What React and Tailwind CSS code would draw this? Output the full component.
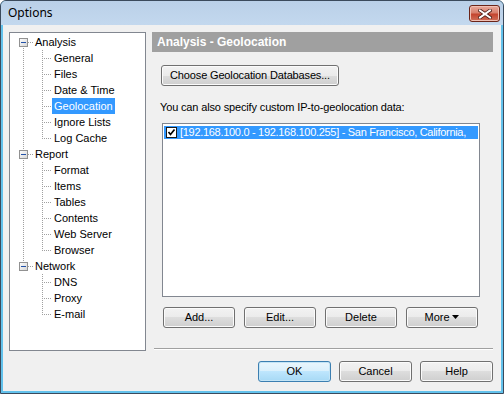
import React from 'react';

const tree = [
    { label: 'Analysis', children: ['General', 'Files', 'Date & Time', 'Geolocation', 'Ignore Lists', 'Log Cache'] },
    { label: 'Report', children: ['Format', 'Items', 'Tables', 'Contents', 'Web Server', 'Browser'] },
    { label: 'Network', children: ['DNS', 'Proxy', 'E-mail'] },
];

const DOT = '#a0a0a0';

const RootLines = ({ first, last }) => (
    <svg width="25" height="16" className="shrink-0" shapeRendering="crispEdges">
        <defs>
            <linearGradient id="exp" x1="0" y1="0" x2="1" y2="1">
                <stop offset="0" stopColor="#ffffff" />
                <stop offset="1" stopColor="#d4d4d4" />
            </linearGradient>
        </defs>
        <line x1="13.5" y1={first ? 8 : 0} x2="13.5" y2={last ? 8 : 16} stroke={DOT} strokeDasharray="1 1" />
        <line x1="18" y1="8.5" x2="24" y2="8.5" stroke={DOT} strokeDasharray="1 1" />
        <rect x="9.5" y="4.5" width="8" height="8" fill="url(#exp)" stroke="#919191" />
        <rect x="11" y="8" width="5" height="1" fill="#2352a8" />
    </svg>
);

const ChildLines = ({ parentLast, last }) => (
    <svg width="42" height="16" className="shrink-0" shapeRendering="crispEdges">
        {!parentLast && <line x1="13.5" y1="0" x2="13.5" y2="16" stroke={DOT} strokeDasharray="1 1" />}
        <line x1="32.5" y1="0" x2="32.5" y2={last ? 9 : 16} stroke={DOT} strokeDasharray="1 1" />
        <line x1="34" y1="8.5" x2="42" y2="8.5" stroke={DOT} strokeDasharray="1 1" />
    </svg>
);

const Button = ({ children, className = '', primary }) => (
    <div
        className={`flex h-[21px] items-center justify-center rounded-[3px] border text-[11px] text-black ${primary
            ? 'border-[#3c7fb1] bg-[linear-gradient(to_bottom,#eaf6fd_0%,#d9f0fc_50%,#bee6fd_50%,#a7d9f5_100%)] shadow-[inset_0_0_0_1px_#c4e5f6]'
            : 'border-[#707070] bg-[linear-gradient(to_bottom,#f2f2f2_0%,#ebebeb_50%,#dddddd_50%,#cfcfcf_100%)] shadow-[inset_0_0_0_1px_#fbfbfb]'
            } ${className}`}
    >
        {children}
    </div>
);

export default function App() {
    return (
        <div className="w-[504px] h-[394px] bg-white" style={{ fontFamily: '"Liberation Sans", Arial, sans-serif' }}>
            <div className="flex h-full w-full flex-col overflow-hidden rounded-t-[6px] border border-[#3b4a5c] bg-[#63c2ec]">
                {/* title bar */}
                <div className="flex h-[24px] shrink-0 items-start justify-between bg-[linear-gradient(to_bottom,#bad0e8,#c3d8ee)] pl-[7px] pr-[3px]">
                    <span className="mt-[4px] text-[12px] leading-[16px] text-black" style={{ fontFamily: '"Noto Sans", "Liberation Sans", sans-serif' }}>Options</span>
                    <div className="mt-[4px] flex h-[17px] w-[31px] items-center justify-center rounded-[3px] border border-[#6b2418] bg-[linear-gradient(to_bottom,#e9a99c_0%,#d8806d_45%,#c4452f_55%,#d0705a_100%)] shadow-[inset_0_0_0_1px_#f0c0b4]">
                        <svg width="14" height="10" viewBox="0 0 14 10">
                            <path d="M2 1.5 L12 8.5 M12 1.5 L2 8.5" stroke="#4a1c14" strokeWidth="3.6" strokeLinecap="square" />
                            <path d="M2 1.5 L12 8.5 M12 1.5 L2 8.5" stroke="#ffffff" strokeWidth="2" strokeLinecap="square" />
                        </svg>
                    </div>
                </div>

                {/* client area */}
                <div className="mx-[2px] mb-[2px] flex flex-1 bg-[#f0f0f0] pl-[6px] pr-[8px] pt-[7px]">
                    {/* tree */}
                    <div className="h-[319px] w-[137px] shrink-0 border border-[#828790] bg-white pt-[1px] text-[11px] leading-[16px] text-black">
                        {tree.map((node, i) => (
                            <React.Fragment key={node.label}>
                                <div className="flex h-[16px] items-center">
                                    <RootLines first={i === 0} last={i === tree.length - 1} />
                                    <span>{node.label}</span>
                                </div>
                                {node.children.map((c, j) => (
                                    <div key={c} className="flex h-[16px] items-center">
                                        <ChildLines parentLast={i === tree.length - 1} last={j === node.children.length - 1} />
                                        <span className={`h-[16px] px-[2px] ${c === 'Geolocation' ? 'bg-[#3399ff] text-white' : ''}`}>{c}</span>
                                    </div>
                                ))}
                            </React.Fragment>
                        ))}
                    </div>

                    {/* right pane */}
                    <div className="ml-[6px] flex w-[341px] flex-col">
                        <div className="flex h-[20px] items-center bg-[#a0a0a0] pl-[5px] text-[12px] font-bold text-white">
                            Analysis - Geolocation
                        </div>
                        <Button className="ml-[9px] mt-[13px] w-[178px] tracking-[-0.15px]">Choose Geolocation Databases...</Button>
                        <div className="ml-[8px] mt-[15px] text-[11px] leading-[13px] tracking-[-0.15px] text-black">
                            You can also specify custom IP-to-geolocation data:
                        </div>
                        <div className="ml-[10px] mt-[9px] h-[174px] w-[318px] border border-[#828790] bg-white px-[1px] pt-[2px]">
                            <div className="flex h-[13px] items-center overflow-hidden whitespace-nowrap bg-[#3399ff] pl-[2px] text-[11px] tracking-[-0.3px] text-white">
                                <svg width="11" height="11" viewBox="0 0 11 11" className="shrink-0" shapeRendering="crispEdges">
                                    <rect x="0.5" y="0.5" width="10" height="10" fill="#ffffff" stroke="#1a1a1a" />
                                    <path d="M2.5 5 L4.5 7.5 L8.5 2.5" stroke="#000000" strokeWidth="1.7" fill="none" shapeRendering="geometricPrecision" />
                                </svg>
                                <span className="ml-[3px]">[192.168.100.0 - 192.168.100.255] - San Francisco, California,</span>
                            </div>
                        </div>
                        <div className="ml-[11px] mt-[10px] flex gap-[9px]">
                            <Button className="w-[72px]">Add...</Button>
                            <Button className="w-[72px]">Edit...</Button>
                            <Button className="w-[72px]">Delete</Button>
                            <Button className="w-[72px]">
                                More
                                <svg width="8" height="5" viewBox="0 0 8 5" className="ml-[2px]">
                                    <path d="M0 0 H7 L3.5 4 Z" fill="#000000" />
                                </svg>
                            </Button>
                        </div>
                        <div className="ml-[2px] mt-[20px] border-t border-b border-t-[#a0a0a0] border-b-white" />
                        <div className="mt-[11px] flex justify-end gap-[8px]">
                            <Button primary className="w-[73px]">OK</Button>
                            <Button className="w-[73px]">Cancel</Button>
                            <Button className="w-[73px]">Help</Button>
                        </div>
                    </div>
                </div>
            </div>
        </div>
    );
}
